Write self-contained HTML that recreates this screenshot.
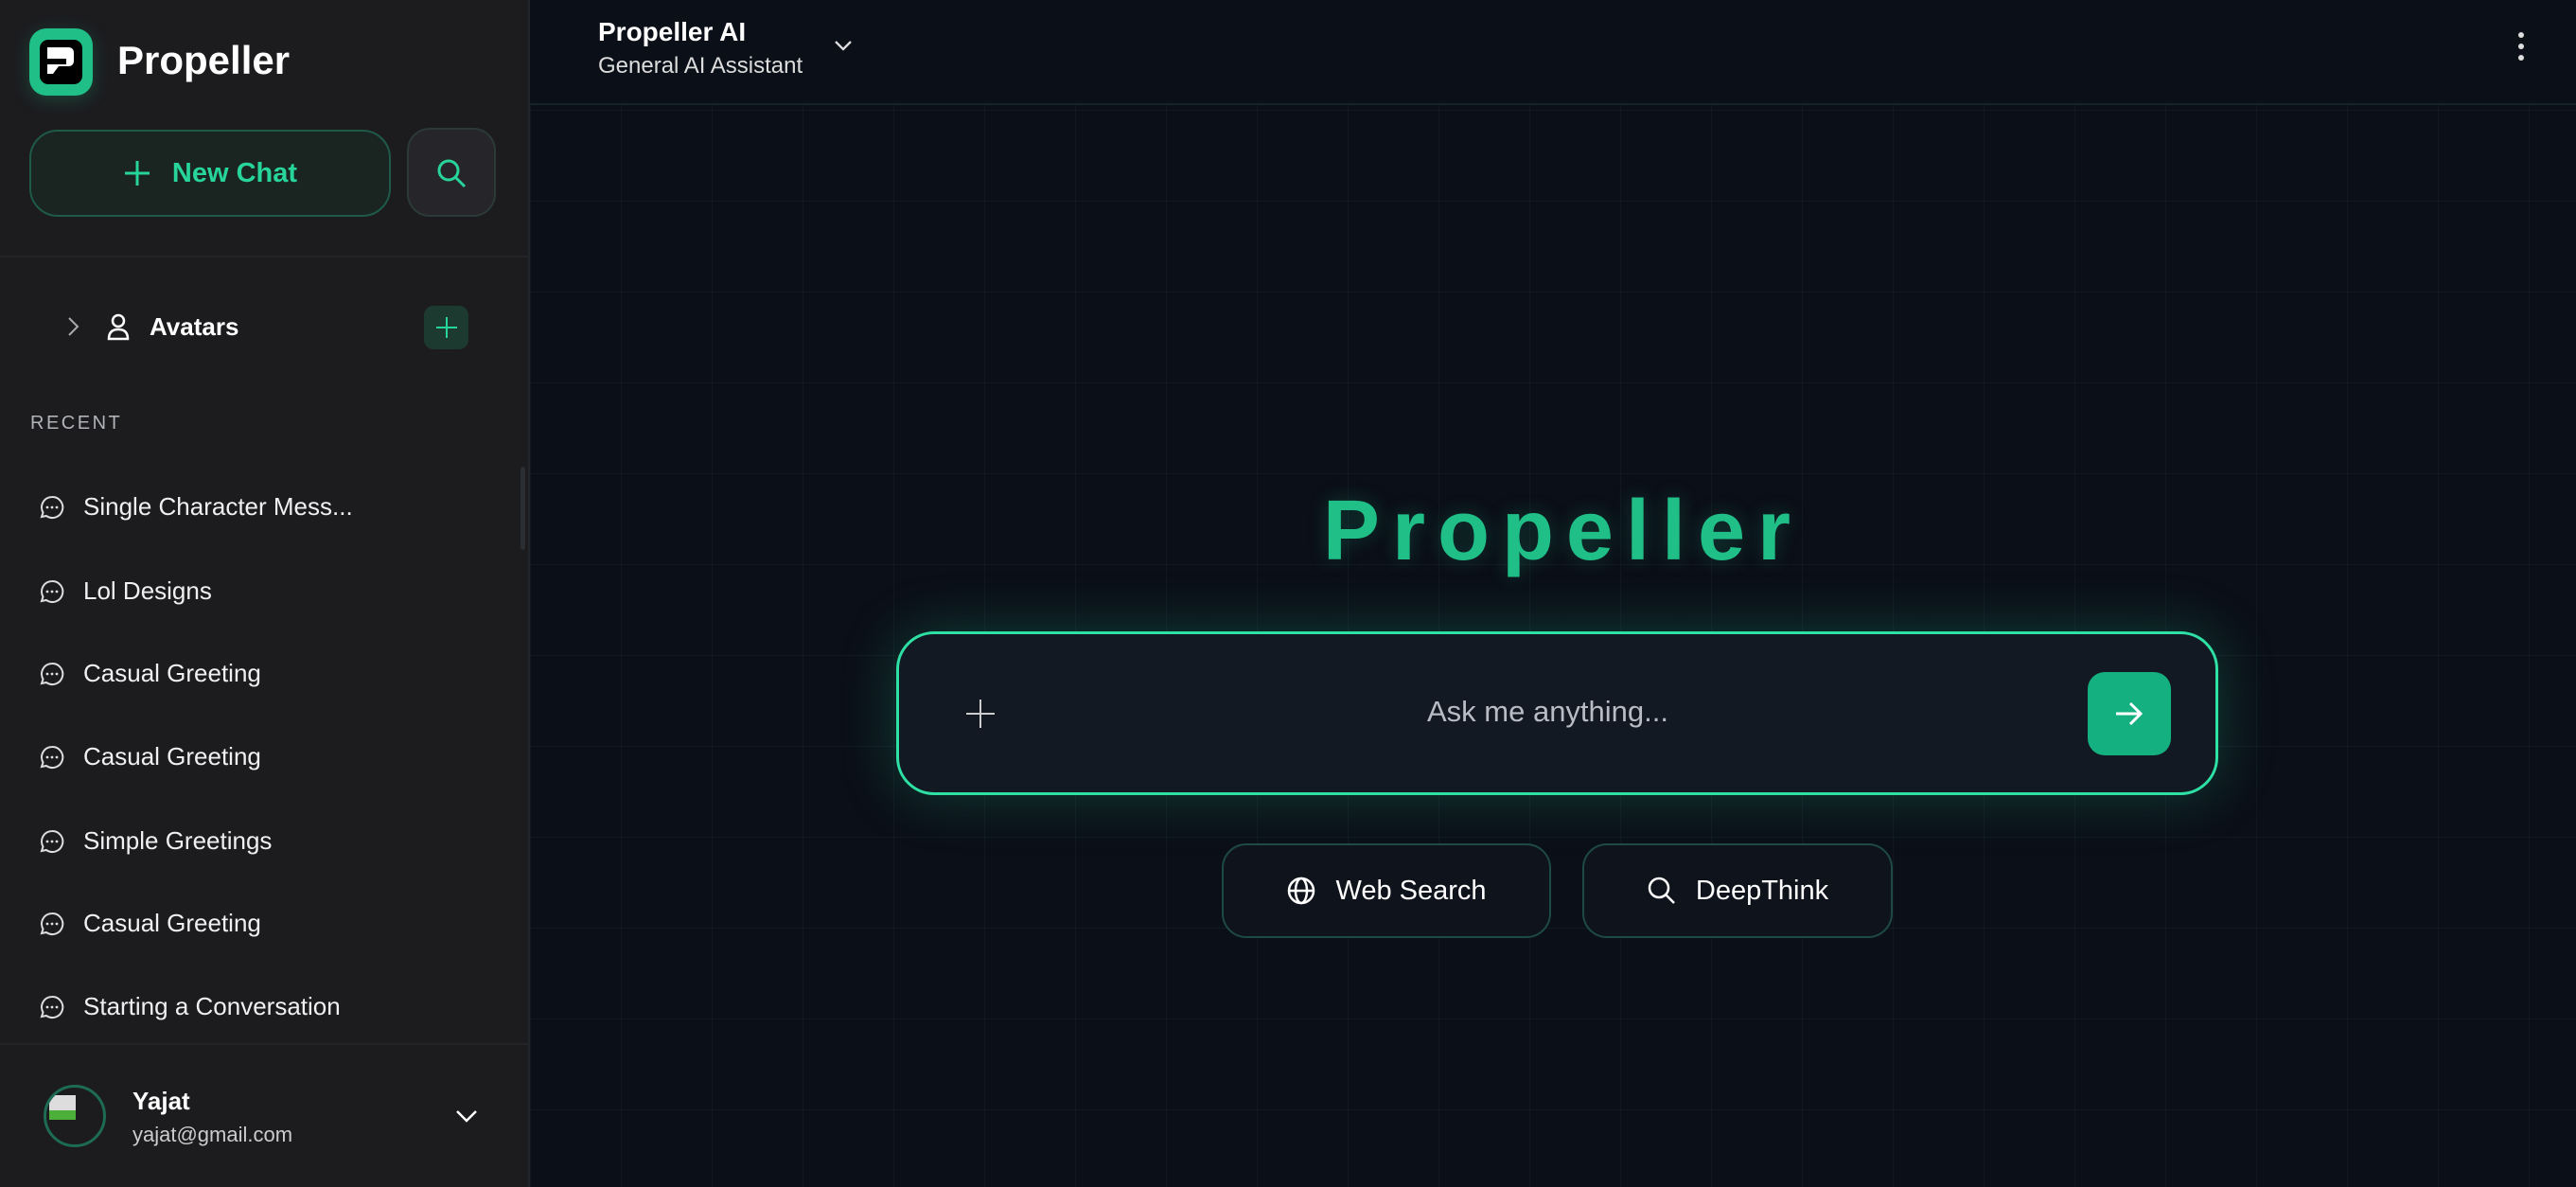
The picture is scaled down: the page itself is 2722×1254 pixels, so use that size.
<!DOCTYPE html>
<html><head><meta charset="utf-8"><style>
*{box-sizing:border-box;margin:0;padding:0}
body{width:2722px;height:1254px;overflow:hidden;background:#0b0f18;font-family:"Liberation Sans",sans-serif;position:relative;color:#fff}
.side{position:absolute;left:0;top:0;width:560px;height:1254px;background:#1c1c1f;border-right:2px solid #22252a}
.abs{position:absolute}
.main{position:absolute;left:560px;top:0;right:0;bottom:0;
background-image:linear-gradient(rgba(40,70,70,.18) 1px,transparent 1px),linear-gradient(90deg,rgba(40,70,70,.18) 1px,transparent 1px);background-size:96px 96px;background-position:0 20px}
.item{position:absolute;left:40px;font-size:26px;color:#f0f0f0;display:flex;align-items:center;gap:18px}
</style></head><body>
<div class="side">
  <div class="abs" style="left:31px;top:30px;width:67px;height:71px;border-radius:18px;background:#1fbf87;box-shadow:0 4px 18px rgba(31,191,135,.25)">
    <div class="abs" style="left:11px;top:12px;width:45px;height:47px;border-radius:9px;background:#000">
      <svg width="45" height="47" viewBox="0 0 45 47"><path d="M8 8h22q6 0 6 6v8q0 6-6 6H20l-6 8h-6v-10h20v-6H8z" fill="#fff"/></svg>
    </div>
  </div>
  <div class="abs" style="left:124px;top:40px;font-size:42px;font-weight:bold">Propeller</div>
  <div class="abs" style="left:31px;top:137px;width:382px;height:92px;border:2px solid #1f5a48;border-radius:30px;background:#1a2420;display:flex;align-items:center;justify-content:center;gap:22px;color:#27d49a;font-size:29px;font-weight:bold">
    <svg width="30" height="30"><path d="M15 2v26M2 15h26" stroke="#27d49a" stroke-width="3"/></svg>New Chat</div>
  <div class="abs" style="left:430px;top:135px;width:94px;height:94px;border:2px solid #2b3a36;border-radius:24px;background:#26262a">
    <svg class="abs" style="left:28px;top:29px" width="36" height="36"><circle cx="14" cy="14" r="10" fill="none" stroke="#27d49a" stroke-width="3"/><path d="M21 21l10 10" stroke="#27d49a" stroke-width="3"/></svg></div>
  <div class="abs" style="left:0;top:270px;width:560px;height:2px;background:#232428"></div>
  <svg class="abs" style="left:70px;top:333px" width="16" height="24"><path d="M3 3l9 9-9 9" fill="none" stroke="#aaa" stroke-width="2"/></svg>
  <svg class="abs" style="left:113px;top:330px" width="24" height="30"><circle cx="12" cy="9" r="6" fill="none" stroke="#fff" stroke-width="2.5"/><path d="M2 28q0-10 10-10t10 10z" fill="none" stroke="#fff" stroke-width="2.5"/></svg>
  <div class="abs" style="left:158px;top:330px;font-size:26px;font-weight:bold">Avatars</div>
  <div class="abs" style="left:448px;top:323px;width:47px;height:46px;border-radius:10px;background:#1d3a30">
    <svg class="abs" style="left:12px;top:11px" width="24" height="24"><path d="M12 1v22M1 12h22" stroke="#27d49a" stroke-width="2"/></svg></div>
  <div class="abs" style="left:32px;top:436px;font-size:20px;letter-spacing:2.5px;color:#b0b3b8">RECENT</div>
  <div class="abs" style="left:550px;top:493px;width:5px;height:88px;background:#2a2d31;border-radius:3px"></div>
  <div class="item" style="top:520px"><svg width="30" height="30"><path d="M15 4a11 11 0 1 1-6 20l-5 1 1.5-4.5A11 11 0 0 1 15 4z" fill="none" stroke="#ddd" stroke-width="2"/><circle cx="10" cy="15" r="1.4" fill="#ddd"/><circle cx="15" cy="15" r="1.4" fill="#ddd"/><circle cx="20" cy="15" r="1.4" fill="#ddd"/></svg>Single Character Mess...</div>
  <div class="item" style="top:609px"><svg width="30" height="30"><path d="M15 4a11 11 0 1 1-6 20l-5 1 1.5-4.5A11 11 0 0 1 15 4z" fill="none" stroke="#ddd" stroke-width="2"/><circle cx="10" cy="15" r="1.4" fill="#ddd"/><circle cx="15" cy="15" r="1.4" fill="#ddd"/><circle cx="20" cy="15" r="1.4" fill="#ddd"/></svg>Lol Designs</div>
  <div class="item" style="top:696px"><svg width="30" height="30"><path d="M15 4a11 11 0 1 1-6 20l-5 1 1.5-4.5A11 11 0 0 1 15 4z" fill="none" stroke="#ddd" stroke-width="2"/><circle cx="10" cy="15" r="1.4" fill="#ddd"/><circle cx="15" cy="15" r="1.4" fill="#ddd"/><circle cx="20" cy="15" r="1.4" fill="#ddd"/></svg>Casual Greeting</div>
  <div class="item" style="top:784px"><svg width="30" height="30"><path d="M15 4a11 11 0 1 1-6 20l-5 1 1.5-4.5A11 11 0 0 1 15 4z" fill="none" stroke="#ddd" stroke-width="2"/><circle cx="10" cy="15" r="1.4" fill="#ddd"/><circle cx="15" cy="15" r="1.4" fill="#ddd"/><circle cx="20" cy="15" r="1.4" fill="#ddd"/></svg>Casual Greeting</div>
  <div class="item" style="top:873px"><svg width="30" height="30"><path d="M15 4a11 11 0 1 1-6 20l-5 1 1.5-4.5A11 11 0 0 1 15 4z" fill="none" stroke="#ddd" stroke-width="2"/><circle cx="10" cy="15" r="1.4" fill="#ddd"/><circle cx="15" cy="15" r="1.4" fill="#ddd"/><circle cx="20" cy="15" r="1.4" fill="#ddd"/></svg>Simple Greetings</div>
  <div class="item" style="top:960px"><svg width="30" height="30"><path d="M15 4a11 11 0 1 1-6 20l-5 1 1.5-4.5A11 11 0 0 1 15 4z" fill="none" stroke="#ddd" stroke-width="2"/><circle cx="10" cy="15" r="1.4" fill="#ddd"/><circle cx="15" cy="15" r="1.4" fill="#ddd"/><circle cx="20" cy="15" r="1.4" fill="#ddd"/></svg>Casual Greeting</div>
  <div class="item" style="top:1048px"><svg width="30" height="30"><path d="M15 4a11 11 0 1 1-6 20l-5 1 1.5-4.5A11 11 0 0 1 15 4z" fill="none" stroke="#ddd" stroke-width="2"/><circle cx="10" cy="15" r="1.4" fill="#ddd"/><circle cx="15" cy="15" r="1.4" fill="#ddd"/><circle cx="20" cy="15" r="1.4" fill="#ddd"/></svg>Starting a Conversation</div>
  <div class="abs" style="left:0;top:1102px;width:560px;height:2px;background:#232428"></div>
  <div class="abs" style="left:46px;top:1146px;width:66px;height:66px;border-radius:50%;border:3px solid #1d6b52;overflow:hidden;background:#1c1c1f">
    <div class="abs" style="left:3px;top:8px;width:28px;height:26px;background:#ddd"></div>
    <div class="abs" style="left:3px;top:24px;width:28px;height:10px;background:#4caf3a"></div>
  </div>
  <div class="abs" style="left:140px;top:1148px;font-size:26px;font-weight:bold">Yajat</div>
  <div class="abs" style="left:140px;top:1186px;font-size:22px;color:#ccc">yajat@gmail.com</div>
  <svg class="abs" style="left:480px;top:1170px" width="26" height="18"><path d="M3 4l10 10 10-10" fill="none" stroke="#fff" stroke-width="2.5"/></svg>
</div>
<div class="main">
  <div class="abs" style="left:0;top:0;right:0;height:111px;background:#0b0f18;border-bottom:2px solid #15222a"></div>
  <div class="abs" style="left:72px;top:18px;font-size:28px;font-weight:bold">Propeller AI</div>
  <div class="abs" style="left:72px;top:56px;font-size:24px;color:#ddd">General AI Assistant</div>
  <svg class="abs" style="left:320px;top:40px" width="22" height="16"><path d="M3 4l8 8 8-8" fill="none" stroke="#ddd" stroke-width="2.3"/></svg>
  <svg class="abs" style="left:2096px;top:32px" width="16" height="34"><circle cx="8" cy="5" r="3" fill="#ddd"/><circle cx="8" cy="17" r="3" fill="#ddd"/><circle cx="8" cy="29" r="3" fill="#ddd"/></svg>
  <div class="abs" style="left:485px;top:510px;width:1200px;font-size:90px;font-weight:bold;color:#1fbf87;text-align:center;letter-spacing:13px;text-indent:13px;text-shadow:0 0 20px rgba(31,191,135,.25)">Propeller</div>
  <div class="abs" style="left:387px;top:667px;width:1397px;height:173px;border:3px solid #2ee0a4;border-radius:40px;background:#121922;box-shadow:0 0 60px rgba(31,191,135,.28)">
    <svg class="abs" style="left:70px;top:68px" width="32" height="32"><path d="M16 1v30M1 16h30" stroke="#ccc" stroke-width="2"/></svg>
    <div class="abs" style="left:-20px;right:0;top:64px;text-align:center;font-size:31px;color:#b8bcc4">Ask me anything...</div>
    <div class="abs" style="left:1256px;top:40px;width:88px;height:88px;border-radius:18px;background:#15b07f">
      <svg class="abs" style="left:26px;top:26px" width="36" height="36"><path d="M4 18h26M19 7l11 11-11 11" fill="none" stroke="#fff" stroke-width="3"/></svg></div>
  </div>
  <div class="abs" style="left:731px;top:891px;width:348px;height:100px;border:2px solid #1d4a46;border-radius:26px;background:#0f141c;display:flex;align-items:center;justify-content:center;gap:20px;font-size:29px">
    <svg width="32" height="32"><circle cx="16" cy="16" r="13" fill="none" stroke="#fff" stroke-width="2.5"/><ellipse cx="16" cy="16" rx="6" ry="13" fill="none" stroke="#fff" stroke-width="2.5"/><path d="M3 16h26" stroke="#fff" stroke-width="2.5"/></svg>Web Search</div>
  <div class="abs" style="left:1112px;top:891px;width:328px;height:100px;border:2px solid #1d4a46;border-radius:26px;background:#0f141c;display:flex;align-items:center;justify-content:center;gap:20px;font-size:29px">
    <svg width="32" height="32"><circle cx="13" cy="13" r="10" fill="none" stroke="#fff" stroke-width="2.5"/><path d="M20 20l9 9" stroke="#fff" stroke-width="2.5"/></svg>DeepThink</div>
</div>
</body></html>
